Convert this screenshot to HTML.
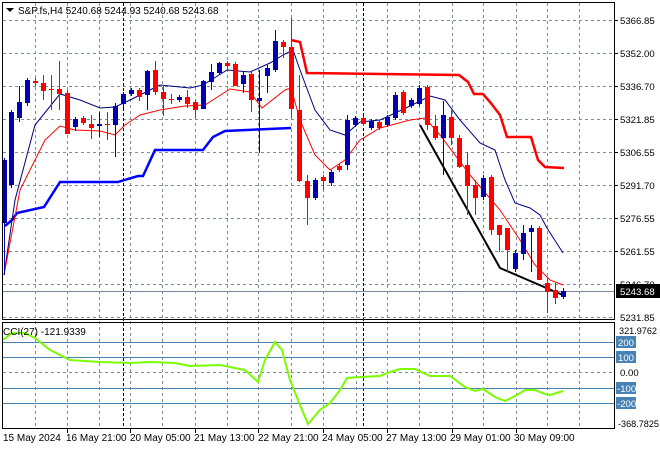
<!DOCTYPE html>
<html><head><meta charset="utf-8"><style>
body{margin:0;background:#fff;width:660px;height:450px;overflow:hidden;font-family:"Liberation Sans",sans-serif}
svg text{font-family:"Liberation Sans",sans-serif;font-size:10px}
svg .ax text{font-size:9.6px}
</style></head><body>
<svg width="660" height="450" viewBox="0 0 660 450" xmlns="http://www.w3.org/2000/svg">
<rect width="660" height="450" fill="#fff"/>
<g stroke="#7f8c99" stroke-dasharray="3,3" stroke-width="1">
<line x1="3" y1="20.5" x2="614" y2="20.5"/><line x1="3" y1="53.5" x2="614" y2="53.5"/><line x1="3" y1="86.5" x2="614" y2="86.5"/><line x1="3" y1="119.5" x2="614" y2="119.5"/><line x1="3" y1="152.5" x2="614" y2="152.5"/><line x1="3" y1="185.5" x2="614" y2="185.5"/><line x1="3" y1="218.5" x2="614" y2="218.5"/><line x1="3" y1="251.5" x2="614" y2="251.5"/><line x1="3" y1="284.5" x2="614" y2="284.5"/><line x1="3" y1="317.5" x2="614" y2="317.5"/>
<line x1="3" y1="372.5" x2="614" y2="372.5"/>
<line x1="35.5" y1="3" x2="35.5" y2="428"/><line x1="67.5" y1="3" x2="67.5" y2="428"/><line x1="99.5" y1="3" x2="99.5" y2="428"/><line x1="130.5" y1="3" x2="130.5" y2="428"/><line x1="162.5" y1="3" x2="162.5" y2="428"/><line x1="195.5" y1="3" x2="195.5" y2="428"/><line x1="227.5" y1="3" x2="227.5" y2="428"/><line x1="258.5" y1="3" x2="258.5" y2="428"/><line x1="291.5" y1="3" x2="291.5" y2="428"/><line x1="323.5" y1="3" x2="323.5" y2="428"/><line x1="356.5" y1="3" x2="356.5" y2="428"/><line x1="387.5" y1="3" x2="387.5" y2="428"/><line x1="419.5" y1="3" x2="419.5" y2="428"/><line x1="452.5" y1="3" x2="452.5" y2="428"/><line x1="483.5" y1="3" x2="483.5" y2="428"/><line x1="516.5" y1="3" x2="516.5" y2="428"/><line x1="547.5" y1="3" x2="547.5" y2="428"/><line x1="579.5" y1="3" x2="579.5" y2="428"/>
</g>
<g stroke="#000" stroke-dasharray="3,2"><line x1="123.5" y1="3" x2="123.5" y2="428"/><line x1="363.5" y1="3" x2="363.5" y2="428"/></g>
<g stroke="#4682b4"><line x1="3" y1="342.5" x2="614" y2="342.5"/><line x1="3" y1="357.5" x2="614" y2="357.5"/><line x1="3" y1="388.5" x2="614" y2="388.5"/><line x1="3" y1="403.5" x2="614" y2="403.5"/></g>
<line x1="3" y1="291.5" x2="614" y2="291.5" stroke="#778899"/>
<polyline fill="none" stroke="#0000ff" stroke-width="2.5" points="5,226 12,220 17,213 44,207 60,182 118,182 138,176 143,176 155,150 203,150 213,137 225,131 291,128"/>
<polyline fill="none" stroke="#ff0000" stroke-width="2.5" points="291,40 300,42 307,73 459,75 468,82 474,94 483,94 490,102 500,115 507,137 531,137 538,160 545,167 564,168"/>
<polyline fill="none" stroke="#00007f" stroke-width="1" points="4,275 15,200 35,125 60,94 80,100 100,108 115,107 130,100 160,85 190,88 203,85 227,70 250,72 270,63 283,55 293,50 300,70 315,110 330,130 345,135 360,122 380,120 410,106 430,96 445,100 460,120 480,143 495,150 505,180 515,203 530,208 540,215 547,228 563,253"/>
<polyline fill="none" stroke="#ff0000" stroke-width="1" points="4,275 20,190 45,140 60,126 75,130 100,131 115,135 125,125 140,115 160,110 185,106 205,105 230,89 250,92 262,108 285,90 291,88 300,120 315,155 330,170 345,160 360,140 380,128 410,120 425,118 440,135 470,175 500,210 520,240 535,265 550,280 563,285"/>
<polyline fill="none" stroke="#000" stroke-width="2" points="420,125 500,268 565,296"/>
<g stroke-width="1">
<g stroke="#0000b0">
<line x1="4.5" y1="158" x2="4.5" y2="275"/><line x1="11.5" y1="110" x2="11.5" y2="188"/><line x1="19.5" y1="86" x2="19.5" y2="122"/><line x1="27.5" y1="78" x2="27.5" y2="106"/><line x1="75.5" y1="117" x2="75.5" y2="131"/><line x1="99.5" y1="112" x2="99.5" y2="137"/><line x1="115.5" y1="103" x2="115.5" y2="157"/><line x1="123.5" y1="92" x2="123.5" y2="110"/><line x1="131.5" y1="88" x2="131.5" y2="96"/><line x1="147.5" y1="70" x2="147.5" y2="110"/><line x1="179.5" y1="95" x2="179.5" y2="102"/><line x1="203.5" y1="80" x2="203.5" y2="109"/><line x1="211.5" y1="64" x2="211.5" y2="90"/><line x1="219.5" y1="62" x2="219.5" y2="75"/><line x1="243.5" y1="72" x2="243.5" y2="93"/><line x1="259.5" y1="70" x2="259.5" y2="153"/><line x1="267.5" y1="65" x2="267.5" y2="93"/><line x1="275.5" y1="30" x2="275.5" y2="72"/>
<line x1="315.5" y1="178" x2="315.5" y2="200"/><line x1="331.5" y1="170" x2="331.5" y2="186"/><line x1="347.5" y1="115" x2="347.5" y2="170"/><line x1="355.5" y1="116" x2="355.5" y2="127"/><line x1="371.5" y1="119" x2="371.5" y2="130"/><line x1="387.5" y1="115" x2="387.5" y2="127"/><line x1="395.5" y1="92" x2="395.5" y2="120"/><line x1="411.5" y1="98" x2="411.5" y2="108"/><line x1="419.5" y1="85" x2="419.5" y2="106"/><line x1="443.5" y1="101" x2="443.5" y2="175"/><line x1="483.5" y1="175" x2="483.5" y2="200"/><line x1="515.5" y1="250" x2="515.5" y2="272"/><line x1="523.5" y1="225" x2="523.5" y2="260"/><line x1="531.5" y1="225" x2="531.5" y2="272"/><line x1="563.5" y1="288" x2="563.5" y2="299"/>
</g>
<g stroke="#ff0000">
<line x1="35.5" y1="78" x2="35.5" y2="86"/><line x1="43.5" y1="75" x2="43.5" y2="100"/><line x1="51.5" y1="75" x2="51.5" y2="110"/><line x1="59.5" y1="61" x2="59.5" y2="110"/><line x1="67.5" y1="90" x2="67.5" y2="134"/><line x1="83.5" y1="116" x2="83.5" y2="125"/><line x1="91.5" y1="115" x2="91.5" y2="139"/><line x1="107.5" y1="112" x2="107.5" y2="140"/><line x1="139.5" y1="88" x2="139.5" y2="101"/><line x1="155.5" y1="61" x2="155.5" y2="95"/><line x1="163.5" y1="85" x2="163.5" y2="116"/><line x1="171.5" y1="94" x2="171.5" y2="104"/><line x1="187.5" y1="90" x2="187.5" y2="108"/><line x1="195.5" y1="100" x2="195.5" y2="118"/><line x1="227.5" y1="61" x2="227.5" y2="70"/><line x1="235.5" y1="62" x2="235.5" y2="86"/><line x1="251.5" y1="72" x2="251.5" y2="112"/><line x1="283.5" y1="40" x2="283.5" y2="58"/><line x1="291.5" y1="18" x2="291.5" y2="118"/><line x1="299.5" y1="75" x2="299.5" y2="182"/><line x1="307.5" y1="175" x2="307.5" y2="225"/><line x1="323.5" y1="175" x2="323.5" y2="190"/><line x1="339.5" y1="164" x2="339.5" y2="172"/><line x1="363.5" y1="116" x2="363.5" y2="126"/><line x1="379.5" y1="120" x2="379.5" y2="130"/><line x1="403.5" y1="90" x2="403.5" y2="115"/><line x1="427.5" y1="85" x2="427.5" y2="130"/><line x1="435.5" y1="115" x2="435.5" y2="140"/><line x1="451.5" y1="110" x2="451.5" y2="145"/><line x1="459.5" y1="135" x2="459.5" y2="168"/><line x1="467.5" y1="152" x2="467.5" y2="215"/><line x1="475.5" y1="180" x2="475.5" y2="215"/><line x1="491.5" y1="175" x2="491.5" y2="235"/><line x1="499.5" y1="225" x2="499.5" y2="252"/><line x1="507.5" y1="240" x2="507.5" y2="272"/><line x1="539.5" y1="226" x2="539.5" y2="280"/><line x1="547.5" y1="277" x2="547.5" y2="313"/><line x1="555.5" y1="283" x2="555.5" y2="304"/>
</g></g>
<g fill="#0000b0">
<rect x="2" y="160" width="5" height="63"/><rect x="9" y="112" width="5" height="73"/><rect x="17" y="102" width="5" height="16"/><rect x="25" y="80" width="5" height="23"/><rect x="73" y="119" width="5" height="8"/><rect x="97" y="124" width="5" height="2"/><rect x="113" y="106" width="5" height="19"/><rect x="121" y="94" width="5" height="10"/><rect x="129" y="90" width="5" height="4"/><rect x="145" y="71" width="5" height="24"/><rect x="177" y="97" width="5" height="3"/><rect x="201" y="81" width="5" height="28"/><rect x="209" y="72" width="5" height="10"/><rect x="217" y="63" width="5" height="10"/><rect x="241" y="75" width="5" height="9"/><rect x="257" y="98" width="5" height="3"/><rect x="265" y="68" width="5" height="8"/><rect x="273" y="41" width="5" height="29"/>
<rect x="313" y="180" width="5" height="18"/><rect x="329" y="172" width="5" height="11"/><rect x="345" y="120" width="5" height="45"/><rect x="353" y="118" width="5" height="7"/><rect x="369" y="121" width="5" height="7"/><rect x="385" y="117" width="5" height="8"/><rect x="393" y="95" width="5" height="23"/><rect x="409" y="100" width="5" height="6"/><rect x="417" y="88" width="5" height="16"/><rect x="441" y="115" width="5" height="23"/><rect x="481" y="178" width="5" height="19"/><rect x="513" y="253" width="5" height="16"/><rect x="521" y="233" width="5" height="21"/><rect x="529" y="228" width="5" height="4"/><rect x="561" y="291" width="5" height="6"/>
</g>
<g fill="#ff0000">
<rect x="33" y="81" width="5" height="2"/><rect x="41" y="83" width="5" height="8"/><rect x="49" y="89" width="5" height="1"/><rect x="57" y="89" width="5" height="5"/><rect x="65" y="93" width="5" height="41"/><rect x="81" y="118" width="5" height="5"/><rect x="89" y="124" width="5" height="4"/><rect x="105" y="124" width="5" height="1"/><rect x="137" y="90" width="5" height="7"/><rect x="153" y="70" width="5" height="22"/><rect x="161" y="92" width="5" height="7"/><rect x="169" y="99" width="5" height="1"/><rect x="185" y="97" width="5" height="7"/><rect x="193" y="102" width="5" height="8"/><rect x="225" y="63" width="5" height="3"/><rect x="233" y="64" width="5" height="22"/><rect x="249" y="74" width="5" height="26"/><rect x="281" y="42" width="5" height="5"/><rect x="289" y="47" width="5" height="62"/><rect x="297" y="110" width="5" height="71"/><rect x="305" y="181" width="5" height="17"/><rect x="321" y="177" width="5" height="4"/><rect x="337" y="166" width="5" height="4"/><rect x="361" y="118" width="5" height="6"/><rect x="377" y="122" width="5" height="6"/><rect x="401" y="92" width="5" height="21"/><rect x="425" y="87" width="5" height="38"/><rect x="433" y="126" width="5" height="12"/><rect x="449" y="117" width="5" height="21"/><rect x="457" y="138" width="5" height="29"/><rect x="465" y="165" width="5" height="21"/><rect x="473" y="185" width="5" height="13"/><rect x="489" y="177" width="5" height="53"/><rect x="497" y="225" width="5" height="10"/><rect x="505" y="228" width="5" height="22"/><rect x="537" y="228" width="5" height="52"/><rect x="545" y="283" width="5" height="9"/><rect x="553" y="290" width="5" height="8"/>
</g>
<polyline fill="none" stroke="#7cfc00" stroke-width="2" points="3,340 12,333 25,333 35,338 50,350 70,360 100,362 130,363 150,362 175,363 190,366 220,365 245,370 258,382 265,360 275,342 282,350 290,380 300,405 308,424 320,410 330,403 340,390 347,378 360,377 380,376 390,372 400,369 415,369 430,376 450,376 465,387 475,391 483,389 495,397 505,401 515,396 525,390 535,390 545,394 550,395 563,391"/>
<g fill="none" stroke="#000"><rect x="2.5" y="2.5" width="612" height="317"/><rect x="2.5" y="322.5" width="612" height="106"/></g>
<path d="M6,8 L14,8 L10,12 Z" fill="#000"/>
<text x="18" y="14" fill="#000">S&amp;P.fs,H4  5240.68 5244.93 5240.68 5243.68</text>
<text x="3" y="335" fill="#000">CCI(27) -121.9339</text>
<g fill="#000" class="ax">
<text x="620" y="24">5366.85</text><text x="620" y="57">5352.00</text><text x="620" y="90">5336.70</text><text x="620" y="123">5321.85</text><text x="620" y="156">5306.55</text><text x="620" y="189">5291.70</text><text x="620" y="222">5276.55</text><text x="620" y="255">5261.55</text><text x="620" y="288">5246.70</text><text x="620" y="321">5231.85</text>
<text x="619" y="334" textLength="38" lengthAdjust="spacingAndGlyphs">321.9762</text><text x="618" y="427" textLength="41" lengthAdjust="spacingAndGlyphs">-368.7825</text><text x="620" y="376">0.00</text>
</g>
<rect x="616" y="284" width="44" height="14" fill="#000"/><text x="620" y="295" fill="#fff" style="font-size:9.6px">5243.68</text>
<g fill="#4682b4"><rect x="616" y="336" width="20" height="12"/><rect x="616" y="351" width="20" height="12"/><rect x="616" y="382" width="20" height="12"/><rect x="616" y="397" width="20" height="12"/></g>
<g fill="#fff" class="ax"><text x="618" y="346">200</text><text x="618" y="361">100</text><text x="617" y="392">-100</text><text x="617" y="407">-200</text></g>
<g stroke="#000"><line x1="614" y1="20.5" x2="618" y2="20.5"/><line x1="614" y1="53.5" x2="618" y2="53.5"/><line x1="614" y1="86.5" x2="618" y2="86.5"/><line x1="614" y1="119.5" x2="618" y2="119.5"/><line x1="614" y1="152.5" x2="618" y2="152.5"/><line x1="614" y1="185.5" x2="618" y2="185.5"/><line x1="614" y1="218.5" x2="618" y2="218.5"/><line x1="614" y1="251.5" x2="618" y2="251.5"/></g>
<g fill="#000">
<text x="3" y="441">15 May 2024</text><text x="66" y="441">16 May 21:00</text><text x="130" y="441">20 May 05:00</text><text x="194" y="441">21 May 13:00</text><text x="258" y="441">22 May 21:00</text><text x="322" y="441">24 May 05:00</text><text x="386" y="441">27 May 13:00</text><text x="450" y="441">29 May 01:00</text><text x="514" y="441">30 May 09:00</text>
</g>
<g stroke="#000"><line x1="67.5" y1="429" x2="67.5" y2="433"/><line x1="130.5" y1="429" x2="130.5" y2="433"/><line x1="195.5" y1="429" x2="195.5" y2="433"/><line x1="258.5" y1="429" x2="258.5" y2="433"/><line x1="323.5" y1="429" x2="323.5" y2="433"/><line x1="387.5" y1="429" x2="387.5" y2="433"/><line x1="452.5" y1="429" x2="452.5" y2="433"/><line x1="516.5" y1="429" x2="516.5" y2="433"/></g>
</svg>
</body></html>
